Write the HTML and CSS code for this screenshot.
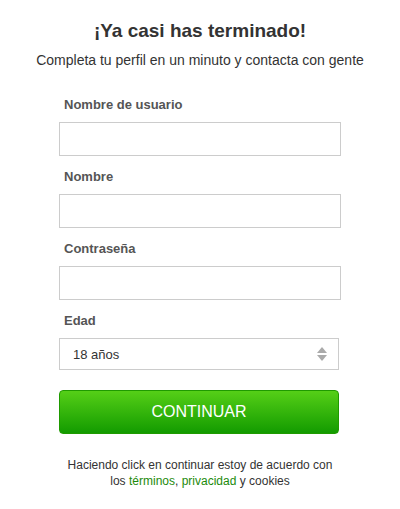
FILE: index.html
```html
<!DOCTYPE html>
<html>
<head>
    <title>Completa tu perfil</title>
    <link rel="stylesheet" href="styles.css">
</head>
<body>
    <div class="signup">
        <h1>¡Ya casi has terminado!</h1>
        <p class="intro">Completa tu perfil en un minuto y contacta con gente</p>

        <form class="form">
            <label class="label" for="username">Nombre de usuario</label>
            <input class="field" id="username" type="text">

            <label class="label" for="name">Nombre</label>
            <input class="field" id="name" type="text">

            <label class="label" for="password">Contraseña</label>
            <input class="field" id="password" type="password">

            <label class="label" for="age">Edad</label>
            <div class="select">
                <span>18 años</span>
                <svg class="arrows" width="12" height="16" viewBox="0 0 12 16">
                    <polygon points="6,1 11,7 1,7" fill="#aaa"/>
                    <polygon points="1,9 11,9 6,15" fill="#aaa"/>
                </svg>
            </div>

            <button class="continue" type="button">CONTINUAR</button>
        </form>

        <p class="legal">
            Haciendo click en continuar estoy de acuerdo con<br>
            los <a href="#">términos</a>, <a href="#">privacidad</a> y cookies
        </p>
    </div>
</body>
</html>
```

FILE: styles.css
```css
body {
    margin: 0;
    font-family: "Liberation Sans", Arial, sans-serif;
    background: #fff;
    color: #333;
}
.signup {
    padding: 17px 0 0;
    text-align: center;
}
h1 {
    margin: 0;
    font-size: 19px;
    line-height: 28px;
    font-weight: bold;
    color: #333;
}
.intro {
    margin: 5px 0 0;
    font-size: 14px;
    line-height: 20px;
    color: #333;
}
.form {
    width: 282px;
    margin: 27px auto 0;
    text-align: left;
}
.label {
    display: block;
    padding-left: 5px;
    margin-bottom: 9px;
    font-size: 13px;
    line-height: 16px;
    font-weight: bold;
    color: #555;
}
.field {
    display: block;
    box-sizing: border-box;
    width: 282px;
    height: 34px;
    margin: 0 0 13px;
    border: 1px solid #ccc;
    background: #fff;
}
.select {
    box-sizing: border-box;
    width: 280px;
    height: 32px;
    border: 1px solid #ccc;
    display: flex;
    align-items: center;
    justify-content: space-between;
    padding: 0 10px 0 13px;
    font-size: 13px;
    color: #333;
}
.continue {
    display: block;
    width: 280px;
    height: 44px;
    margin-top: 20px;
    border: 1px solid #1f9a00;
    border-radius: 4px;
    background: linear-gradient(#55cf17, #139b00);
    color: #fff;
    font-family: "Liberation Sans", Arial, sans-serif;
    font-size: 16px;
}
.legal {
    margin: 23px 0 0;
    font-size: 12px;
    line-height: 16px;
    color: #333;
}
.legal a {
    color: #1d8a0c;
    text-decoration: none;
}
```
